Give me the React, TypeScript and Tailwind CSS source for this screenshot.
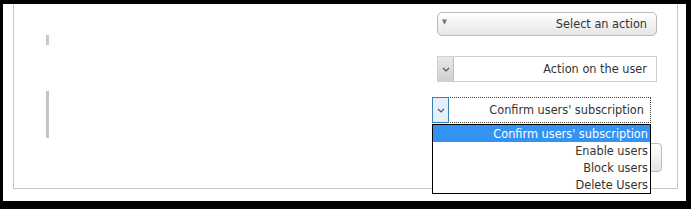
const FONT = "font-['DejaVu_Sans_Condensed','DejaVu_Sans',sans-serif]";

function Chevron({ className = '' }: { className?: string }) {
  return (
    <svg width="8" height="5" viewBox="0 0 8 5" className={className}>
      <path d="M1 1 L4 4 L7 1" fill="none" stroke="#555" strokeWidth="1.2" />
    </svg>
  );
}

const OPTIONS = ["Confirm users' subscription", 'Enable users', 'Block users', 'Delete Users'];

export default function App() {
  return (
    <div className={`w-[691px] h-[209px] bg-black pt-[4px] pl-[3px] pr-[5px] pb-[8px] ${FONT} text-[12.6px] text-[#333]`}>
      <div className="h-full bg-white pl-[10px] pr-[8px]">
        <div className="flex h-[185px] border-l border-b border-r border-[#c8c8c8]">
          {/* left column: collapsed fields */}
          <div className="flex flex-col pl-[32px] pt-[31px]">
            <div className="w-[3px] h-[10px] bg-[#c9c9c9]" />
            <div className="w-[3px] h-[47px] bg-[#c4c4c4] mt-[46px]" />
          </div>

          {/* right column: action selects */}
          <div className="ml-auto mr-[15px] w-[230px] flex flex-col pt-[8px]">
            <div className="ml-[5px] w-[220px] h-[24px] rounded-[5px] border border-[#b9b9b9] bg-gradient-to-b from-white to-[#e6e6e6] flex items-center pl-[4px] pr-[9px]">
              <span className="text-[7px] leading-none text-[#777] -mt-[3px]">▼</span>
              <span className="ml-auto">Select an action</span>
            </div>

            <div className="ml-[5px] mt-[20px] w-[220px] h-[26px] border border-[#cfcfcf] flex">
              <div className="w-[16px] bg-gradient-to-b from-[#e8e8e8] to-[#cfcfcf] border-r border-[#bdbdbd] flex items-center justify-center">
                <Chevron />
              </div>
              <span className="ml-auto self-center pr-[9px]">Action on the user</span>
            </div>

            <div className="relative mt-[15px] w-[219px]">
              <div className="h-[26px] border border-dotted border-[#444] flex">
                <div className="w-[17px] -my-px -ml-px bg-[#e4f0fb] border border-[#3c7fb1] flex items-center justify-center">
                  <Chevron />
                </div>
                <span className="ml-auto self-center pr-[6px]">Confirm users' subscription</span>
              </div>
              <ul className="absolute z-10 left-0 top-full mt-px w-[219px] border border-black bg-white">
                {OPTIONS.map((o, i) => (
                  <li
                    key={o}
                    className={
                      'h-[17px] leading-[17px] text-right pr-[2px] ' +
                      (i === 0 ? 'bg-[#3392f2] text-white' : '')
                    }
                  >
                    {o}
                  </li>
                ))}
              </ul>
            </div>

            <button className="self-end mt-[20px] w-[60px] h-[29px] rounded-[4px] border border-[#bcbcbc] bg-gradient-to-b from-white to-[#e4e4e4]" />
          </div>
        </div>
      </div>
    </div>
  );
}
